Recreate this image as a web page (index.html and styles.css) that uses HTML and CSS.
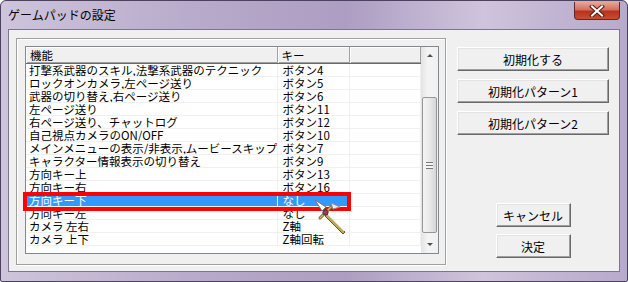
FILE: index.html
```html
<!DOCTYPE html>
<html lang="ja">

<head>
  <meta charset="UTF-8">
  <title>ゲームパッドの設定</title>
  <link rel="stylesheet" href="styles.css">
</head>

<body>

  <div class="window">
    <div class="titlebar">
      <span class="title">ゲームパッドの設定</span>
      <div class="close-btn">
        <svg width="16" height="12" viewBox="0 0 16 12">
          <path d="M3 1.5 L13 10.5 M13 1.5 L3 10.5" stroke="#5a1a12" stroke-width="4" stroke-linecap="square" />
          <path d="M3 1.5 L13 10.5 M13 1.5 L3 10.5" stroke="#ffffff" stroke-width="2" stroke-linecap="square" />
        </svg>
      </div>
    </div>

    <div class="client">
      <div class="panel">
        <div class="listview">
          <div class="list-body">
            <table class="grid">
              <thead>
                <tr>
                  <th class="col-name">機能</th>
                  <th class="col-key">キー</th>
                  <th class="col-pad"></th>
                </tr>
              </thead>
              <tbody>
                <tr><td>打撃系武器のスキル,法撃系武器のテクニック</td><td>ボタン4</td><td></td></tr>
                <tr><td>ロックオンカメラ,左ページ送り</td><td>ボタン5</td><td></td></tr>
                <tr><td>武器の切り替え,右ページ送り</td><td>ボタン6</td><td></td></tr>
                <tr><td>左ページ送り</td><td>ボタン11</td><td></td></tr>
                <tr><td>右ページ送り、チャットログ</td><td>ボタン12</td><td></td></tr>
                <tr><td>自己視点カメラのON/OFF</td><td>ボタン10</td><td></td></tr>
                <tr><td>メインメニューの表示/非表示,ムービースキップ</td><td>ボタン7</td><td></td></tr>
                <tr><td>キャラクター情報表示の切り替え</td><td>ボタン9</td><td></td></tr>
                <tr><td>方向キー上</td><td>ボタン13</td><td></td></tr>
                <tr><td>方向キー右</td><td>ボタン16</td><td></td></tr>
                <tr class="selected"><td>方向キー下</td><td>なし</td><td></td></tr>
                <tr><td>方向キー左</td><td>なし</td><td></td></tr>
                <tr><td>カメラ 左右</td><td>Z軸</td><td></td></tr>
                <tr><td>カメラ 上下</td><td>Z軸回転</td><td></td></tr>
              </tbody>
            </table>
          </div>
          <div class="scrollbar">
            <div class="sb-arrow"><span class="tri-up"></span></div>
            <div class="sb-track">
              <div class="sb-thumb"><span class="grip"></span></div>
            </div>
            <div class="sb-arrow"><span class="tri-down"></span></div>
          </div>
        </div>

        <div class="mark"></div>

        <svg class="cursor" width="34" height="36" viewBox="0 0 34 36">
          <!-- blade -->
          <path d="M13 15 L31 33 L29 35 L11 17 Z" fill="#b8a860" stroke="#6a5a20" stroke-width="1" />
          <path d="M14 16 L30 32" stroke="#e8dca0" stroke-width="1" />
          <!-- guard -->
          <path d="M6 19 L17 8" stroke="#6a5a20" stroke-width="3" stroke-linecap="round" />
          <path d="M6 19 L17 8" stroke="#c8b870" stroke-width="1.5" stroke-linecap="round" />
          <!-- spike -->
          <path d="M1 1 L12 8 L8 12 Z" fill="#ffffff" stroke="#707070" stroke-width="1" />
          <path d="M17 4 L26 8 L19 10 Z" fill="#f0f0f0" stroke="#909090" stroke-width="1" />
          <!-- gem -->
          <circle cx="11.5" cy="13.5" r="2.6" fill="#b03060" stroke="#503030" stroke-width="1" />
        </svg>
      </div>

      <div class="buttons">
        <button class="btn btn-wide">初期化する</button>
        <button class="btn btn-wide">初期化パターン1</button>
        <button class="btn btn-wide">初期化パターン2</button>
        <button class="btn btn-small btn-cancel">キャンセル</button>
        <button class="btn btn-small">決定</button>
      </div>
    </div>
  </div>

</body>

</html>
```

FILE: styles.css
```css
* {
  box-sizing: border-box;
}

body {
  margin: 0;
  font-family: "Noto Sans CJK JP", "Noto Sans", sans-serif;
  font-size: 12px;
  color: #000;
  background: #ffffff;
}

.window {
  width: 628px;
  height: 282px;
  padding: 0 7px 9px 7px;
  border: 1px solid #4b4260;
  border-radius: 6px 6px 2px 2px;
  background: linear-gradient(to right, #cec4db 0%, #b9abcb 30%, #ad9dc2 55%, #cfc4dc 77%, #c2b5d3 88%, #b8aacb 100%);
  display: flex;
  flex-direction: column;
}

.titlebar {
  height: 28px;
  display: flex;
  justify-content: space-between;
  align-items: flex-start;
}

.title {
  margin-top: 6px;
  font-size: 12px;
  line-height: 16px;
  color: #000;
}

.close-btn {
  width: 46px;
  height: 18px;
  margin-top: 1px;
  border: 1px solid #5e2a26;
  border-top: none;
  border-radius: 0 0 4px 4px;
  background: linear-gradient(to bottom, #e7a699 0%, #d3705d 45%, #b7321c 55%, #c94d30 100%);
  display: flex;
  align-items: center;
  justify-content: center;
}

.client {
  flex: 1;
  border: 1px solid #7d7590;
  background: #f0f0f0;
  display: flex;
  align-items: flex-start;
}

.panel {
  position: relative;
  width: 430px;
  height: 227px;
  margin: 8px 0 0 7px;
  padding: 7px 7px 0 8px;
  border: 1px solid #a0a0a0;
  box-shadow: inset 1px 1px #ffffff, 1px 1px #ffffff;
}

.listview {
  width: 414px;
  height: 208px;
  border: 1px solid #828790;
  background: #ffffff;
  display: flex;
}

.list-body {
  flex: 1;
  overflow: hidden;
}

.grid {
  border-collapse: collapse;
  table-layout: fixed;
  width: 395px;
}

.grid th {
  height: 16px;
  padding: 0 0 0 4px;
  font-weight: normal;
  font-size: 11.5px;
  text-align: left;
  line-height: 14px;
  background: #f0f0f0;
  border-right: 1px solid #a0a0a0;
  border-bottom: 1px solid #696969;
  box-shadow: inset 1px 1px #ffffff, inset 0 -1px #a0a0a0;
}

.col-name {
  width: 251px;
}

.col-key {
  width: 72px;
}

.grid td {
  height: 13px;
  padding: 0 0 0 3px;
  font-size: 11.5px;
  line-height: 12px;
  white-space: nowrap;
  overflow: hidden;
  border-right: 1px solid #f0f0f0;
  border-bottom: 1px solid #f0f0f0;
}

.grid td:nth-child(2) {
  padding-left: 5px;
}

.grid tr.selected td:nth-child(1),
.grid tr.selected td:nth-child(2) {
  background: #3399ff;
  color: #ffffff;
}

.grid tr.selected td:nth-child(1) {
  border-right-color: #e8f2ff;
  box-shadow: inset 1px 0 0 0 #ffffff;
}

.scrollbar {
  width: 17px;
  display: flex;
  flex-direction: column;
  background: linear-gradient(to right, #e3e3e3, #f4f4f4 40%, #f0f0f0);
}

.sb-arrow {
  height: 17px;
  display: flex;
  align-items: center;
  justify-content: center;
}

.tri-up {
  width: 0;
  height: 0;
  border-left: 3px solid transparent;
  border-right: 3px solid transparent;
  border-bottom: 3px solid #505050;
}

.tri-down {
  width: 0;
  height: 0;
  border-left: 3px solid transparent;
  border-right: 3px solid transparent;
  border-top: 3px solid #505050;
}

.sb-track {
  flex: 1;
  padding: 33px 0 0 1px;
}

.sb-thumb {
  width: 15px;
  height: 136px;
  border: 1px solid #969696;
  border-radius: 2px;
  background: linear-gradient(to right, #f4f4f4, #e9e9e9 50%, #d6d6d6);
  display: flex;
  align-items: center;
  justify-content: center;
}

.grip {
  width: 7px;
  height: 7px;
  background: repeating-linear-gradient(to bottom, #777777 0, #777777 1px, #f4f4f4 1px, #f4f4f4 3px);
}

.mark {
  position: absolute;
  left: 6px;
  top: 153px;
  width: 328px;
  height: 19px;
  border: 4px solid #ff0000;
}

.cursor {
  position: absolute;
  left: 297px;
  top: 160px;
}

.buttons {
  width: 152px;
  margin: 17px 0 0 11px;
  display: flex;
  flex-direction: column;
  align-items: center;
}

.btn {
  height: 24px;
  padding: 0;
  font-family: "Noto Sans CJK JP", "Noto Sans", sans-serif;
  font-size: 12px;
  color: #000;
  background: #f0f0f0;
  border: 1px solid;
  border-color: #ffffff #696969 #696969 #ffffff;
  box-shadow: inset -1px -1px #a0a0a0, inset 1px 1px #e3e3e3;
}

.btn-wide {
  width: 152px;
  margin-bottom: 8px;
}

.btn-small {
  width: 75px;
  margin-bottom: 7px;
}

.btn-cancel {
  margin-top: 60px;
}
```
